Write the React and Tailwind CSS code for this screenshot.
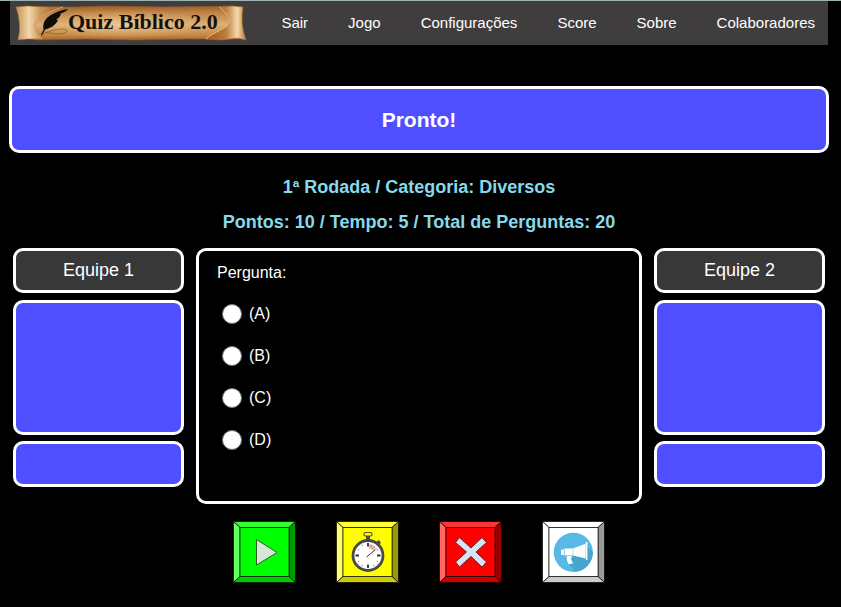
import React from "react";

const links = ["Sair", "Jogo", "Configurações", "Score", "Sobre", "Colaboradores"];
const options = ["A", "B", "C", "D"];

function Logo() {
  return (
    <svg viewBox="0 0 232 36" className="h-9 w-[232px] shrink-0" role="img" aria-label="Quiz Bíblico 2.0">
      <defs>
        <linearGradient id="paper" x1="0" y1="0" x2="0" y2="1">
          <stop offset="0" stopColor="#9c5f28" />
          <stop offset="0.2" stopColor="#c08547" />
          <stop offset="0.55" stopColor="#dbb077" />
          <stop offset="0.85" stopColor="#c68a48" />
          <stop offset="1" stopColor="#a9652a" />
        </linearGradient>
        <linearGradient id="rollLeft" x1="0" y1="0" x2="1" y2="0">
          <stop offset="0" stopColor="#c48f57" />
          <stop offset="0.28" stopColor="#f1d8ac" />
          <stop offset="0.5" stopColor="#cf9a5f" />
          <stop offset="0.75" stopColor="#b47238" />
          <stop offset="1" stopColor="#9c5a25" />
        </linearGradient>
        <linearGradient id="rollRight" x1="0" y1="0" x2="1" y2="0">
          <stop offset="0" stopColor="#a35c22" />
          <stop offset="0.5" stopColor="#bd7c3b" />
          <stop offset="0.78" stopColor="#f3d9aa" />
          <stop offset="1" stopColor="#b87b3d" />
        </linearGradient>
        <radialGradient id="glow" cx="0.5" cy="0.55" r="0.5">
          <stop offset="0" stopColor="#f0d5a5" stopOpacity="0.7" />
          <stop offset="1" stopColor="#e6bd80" stopOpacity="0" />
        </radialGradient>
      </defs>
      <path d="M12 2 L60 2 L90 1 L150 2 L218 1 L224 34 L170 34 L120 35 L70 34 L22 35 L12 33Z" fill="url(#paper)" stroke="#9b5b20" strokeWidth="0.6" />
      <ellipse cx="110" cy="18" rx="85" ry="15" fill="url(#glow)" />
      <path d="M1 2 L12 1 L30 2 L48 2 C38 5 26 10 21 16 C17 21 20 28 27 34 L12 34 L3 35 Q7 20 1 2Z" fill="url(#rollLeft)" stroke="#ad6c30" strokeWidth="0.6" />
      <path d="M48 2 C38 5 26 10 21 16 C17 21 20 28 27 34" fill="none" stroke="#dfb27a" strokeWidth="0.8" />
      <path d="M205 2 L218 1 L228 2 Q225 19 231 35 L222 33 L207 35 L191 34 C197 28 206 26 212 21 C218 15 212 8 205 2Z" fill="url(#rollRight)" stroke="#a9662b" strokeWidth="0.6" />
      <path d="M204 2 C212 8 218 15 212 21 C206 26 197 28 191 34" fill="none" stroke="#ecc58c" strokeWidth="0.9" />
      <path d="M53 4 C46 5 35 9 31 14 C28 18 28 21 28.5 24.5 C35 24 41 20 43 15 L41 15 C45 12 46 10 45.5 8.5 C49 8 51 6 53 4Z" fill="#100c08" />
      <path d="M45 9 C36 15 30 22 26.5 30" fill="none" stroke="#100c08" strokeWidth="1.1" />
      <path d="M26 31 C34 24 54 22 52 26.5 C49 30 36 29 30 27" fill="none" stroke="#8a572a" strokeWidth="0.7" />
      <text x="53" y="24" className="fill-[#17110b] font-['Liberation_Serif',serif] text-[22px] font-bold">Quiz Bíblico 2.0</text>
    </svg>
  );
}

function BevelButton({ label, face, left, top, right, bottom, children }) {
  return (
    <button type="button" aria-label={label} className="cursor-pointer">
      <svg viewBox="0 0 63 62" className="block h-[62px] w-[63px]" aria-hidden="true">
        <g stroke="#000" strokeOpacity="0.65" strokeWidth="1" strokeLinejoin="round">
          <path d="M.5.5H62.5L56 6.5H7Z" fill={top} />
          <path d="M.5.5L7 6.5V55.5L.5 61.5Z" fill={left} />
          <path d="M62.5.5V61.5L56 55.5V6.5Z" fill={right} />
          <path d="M.5 61.5L7 55.5H56L62.5 61.5Z" fill={bottom} />
          <path d="M7 6.5H56V55.5H7Z" fill={face} />
        </g>
        {children}
      </svg>
    </button>
  );
}

function Controls() {
  return (
    <div className="mt-[17px] flex justify-center gap-10">
      <BevelButton label="Iniciar" face="#00ff00" left="#66ff66" top="#33ff33" right="#009900" bottom="#00cc00">
        <path d="M23.5 18.5V44L44 31.5Z" fill="#d5e8d4" stroke="#36592e" strokeWidth="1" strokeLinejoin="round" />
      </BevelButton>
      <BevelButton label="Cronômetro" face="#ffff00" left="#ffff66" top="#ffff33" right="#999900" bottom="#cccc00">
        <rect x="28" y="11.5" width="8" height="3.5" rx="1.5" fill="#ffff00" stroke="#55551c" strokeWidth="1.2" />
        <path d="M30 15h4v5h-4zM40 21l3-2 2 3-3 2z" fill="#494949" />
        <circle cx="32" cy="34.5" r="15" fill="#fff" stroke="#494949" strokeWidth="2.8" />
        <path d="M32 25L34 23 41 27 40 30 36 29Z" fill="#eca9a9" opacity="0.6" />
        <path d="M33 25h5M34 27h5M36 23l-3 5M39 25l-3 4" stroke="#cf7777" strokeWidth="0.6" />
        <path d="M32 22v3.5M32 43.5V47M19.5 34.5H23M41 34.5h3.5" stroke="#333" strokeWidth="1.8" />
        <path d="M25.7 23.7l.8 1.3M22 28.3l1.2.7M22 40.7l1.2-.7M25.7 45.3l.8-1.3M38.3 45.3l-.8-1.3M42 40.7l-1.2-.7M42 28.3l-1.2.7" stroke="#777" strokeWidth="1" />
        <path d="M30.5 36L39 29" stroke="#333" strokeWidth="1" />
      </BevelButton>
      <BevelButton label="Parar" face="#ff0000" left="#ff6666" top="#ff3333" right="#990000" bottom="#cc0000">
        <path d="M20.5 16.5L32 27 43 16.5 47.5 21.5 37 31 47.5 41 43 46 32 35.5 20.5 46 16.5 41 27.5 31 16.5 21.5Z" fill="#d5e3f3" stroke="#702020" strokeWidth="1" strokeLinejoin="round" />
      </BevelButton>
      <BevelButton label="Anunciar" face="#ffffff" left="#ffffff" top="#ffffff" right="#999999" bottom="#cccccc">
        <circle cx="31.3" cy="31.3" r="19.6" fill="#58b9e5" />
        <path d="M44.5 25L50.8 31A19.6 19.6 0 0 1 33 50.8L23 38Z" fill="#47a5cf" />
        <path d="M22.5 27.5H31L44 22.5V37.5L31 34.5H22.5Z" fill="#fff" />
        <path d="M19 29.3Q19 28.5 20 28.5H22V34H20Q19 34 19 33Z" fill="#fff" />
        <path d="M25 35h5l-1 3 2 4.5-4.5.8-2-4.8z" fill="#fff" />
        <path d="M22.3 28v6.5M31 27.5v7M24 34.8h7" stroke="#a9cddd" strokeWidth="0.7" />
        <path d="M44.7 21.5v17" stroke="#fff" strokeWidth="1.5" strokeLinecap="round" />
        <path d="M43.6 23v14.5" stroke="#a9cddd" strokeWidth="0.6" />
      </BevelButton>
    </div>
  );
}

function Team({ name }) {
  return (
    <section className="flex flex-col">
      <h2 className="h-[45px] rounded-[10px] border-3 border-white bg-[#383838] text-center text-lg leading-[38px]">{name}</h2>
      <div className="mt-[7px] h-[135px] rounded-[10px] border-3 border-white bg-[#4f4fff]" />
      <div className="mt-1.5 h-[46px] rounded-[10px] border-3 border-white bg-[#4f4fff]" />
    </section>
  );
}

export default function App() {
  return (
    <div className="min-h-screen border-t border-[#9fb3b3] bg-black pr-3 pl-[9px] font-['Liberation_Sans',Arial,sans-serif] text-white">
      <header className="mx-px flex h-11 items-center bg-[#3f3d3e] pr-[13px] pl-[5px]">
        <Logo />
        <nav className="ml-auto flex gap-10 text-[15px] leading-6">
          {links.map((l) => (
            <a key={l} href="#">{l}</a>
          ))}
        </nav>
      </header>
      <main>
        <h1 className="mt-[41px] h-[67px] rounded-[10px] border-3 border-white bg-[#4f4fff] text-center text-[21px] leading-[61px] font-bold">Pronto!</h1>
        <div className="mt-[17px] text-center text-lg leading-[35px] font-bold text-[#87d9ec]">
          <p>1ª Rodada / Categoria: Diversos</p>
          <p>Pontos: 10 / Tempo: 5 / Total de Perguntas: 20</p>
        </div>
        <div className="mx-1 mt-2 grid grid-cols-[171px_1fr_171px] gap-3">
          <Team name="Equipe 1" />
          <fieldset className="h-64 rounded-[10px] border-3 border-white px-[18px] pt-3 text-base">
            <p id="pergunta" className="mb-2.5 leading-5">Pergunta:</p>
            <div role="radiogroup" aria-labelledby="pergunta">
              {options.map((o) => (
                <label key={o} className="flex h-[42px] items-center gap-[7px] pl-[5px]">
                  <input type="radio" name="resposta" value={o} className="size-5 appearance-none rounded-full border border-[#767676] bg-white checked:border-[6px] checked:border-[#0075ff]" />
                  <span>({o})</span>
                </label>
              ))}
            </div>
          </fieldset>
          <Team name="Equipe 2" />
        </div>
        <Controls />
      </main>
    </div>
  );
}
